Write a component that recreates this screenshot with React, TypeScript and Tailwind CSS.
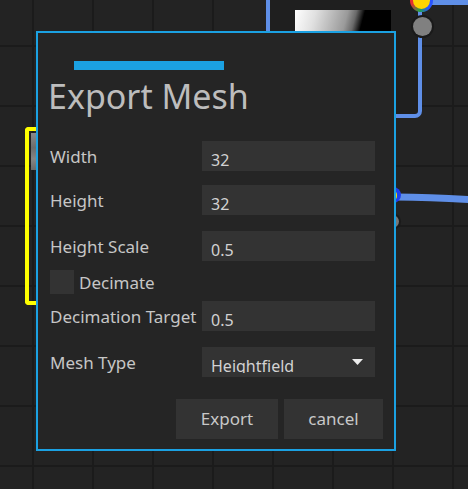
import React from "react";

function Field({ value, select }: { value: string; select?: boolean }) {
  return (
    <div className="relative w-[173px] h-[30px] bg-[#333333] pl-[9px]">
      <div
        className={
          "pt-[9px] text-[16px] leading-[20px] text-[#d2d2d2] " +
          (select ? "h-[26px] overflow-hidden" : "h-[30px]")
        }
      >
        {value}
      </div>
      {select && (
        <svg className="absolute right-[12px] top-[12px]" width="11" height="6" viewBox="0 0 11 6">
          <polygon points="0,0 11,0 5.5,6" fill="#ececec" />
        </svg>
      )}
    </div>
  );
}

function Row({ label, value, select, className }: { label: string; value: string; select?: boolean; className?: string }) {
  return (
    <div className={"flex items-center h-[30px] " + (className ?? "")}>
      <div className="w-[152px] pt-[1px] text-[17px] leading-[20px] text-[#c6c6c6] whitespace-nowrap">{label}</div>
      <Field value={value} select={select} />
    </div>
  );
}

export default function App() {
  return (
    <div className="relative w-[468px] h-[489px] overflow-hidden bg-[#232323] bg-[linear-gradient(to_right,#1b1b1b_2px,transparent_2px),linear-gradient(to_bottom,#1b1b1b_2px,transparent_2px)] bg-[size:60px_60px] bg-[position:32px_45px] font-['Noto_Sans',sans-serif]">
      {/* node in background */}
      <div className="absolute left-[266px] top-[-20px] w-[156px] h-[138px] rounded-br-[7px] border-4 border-[#5f8fe8] bg-[#1f1f1f]" />
      <div className="absolute left-[295px] top-[10px] w-[96px] h-[40px] bg-[linear-gradient(105deg,#ffffff_0%,#e0e0e0_20%,#9a9a9a_50%,#6a6a6a_58%,#000000_66%,#000000_100%)]" />
      <div className="absolute left-[430px] top-[-1px] w-[38px] h-[6px] bg-[#5f8fe8]" />
      <div className="absolute left-[410px] top-[-11px] w-[23px] h-[23px] rounded-full bg-[conic-gradient(#2a55ff_0deg,#2a55ff_140deg,#22a34a_190deg,#e53030_250deg,#e53030_360deg)] flex items-center justify-center">
        <div className="w-[17px] h-[17px] rounded-full bg-[#ffd400]" />
      </div>
      <div className="absolute left-[413px] top-[17px] w-[19px] h-[19px] rounded-full bg-[#808080] shadow-[0_0_0_2px_#1a1a1a]" />

      {/* wire on the right */}
      <svg className="absolute left-0 top-0" width="468" height="489">
        <path d="M396 197 C 430 197.5, 450 198.5, 470 199.5" stroke="#5f8fe8" strokeWidth="7" fill="none" />
      </svg>
      <div className="absolute left-[385px] top-[187px] w-[16px] h-[16px] rounded-full bg-[#1e3ff0] flex items-center justify-center">
        <div className="w-[8px] h-[9px] rounded-full bg-[#f0e000]" />
      </div>
      <div className="absolute left-[386px] top-[215px] w-[13px] h-[13px] rounded-full bg-[#777777] shadow-[0_0_0_2px_#1a1a1a]" />

      {/* yellow bracket on the left */}
      <div className="absolute left-[25px] top-[127px] w-[14px] h-[178px] border-4 border-r-0 border-[#ffff00] rounded-l-[4px]" />
      <div className="absolute left-[31px] top-[133px] w-[5px] h-[37px] bg-[linear-gradient(to_bottom,#8a8a8a,#6c6c6c_40%,#858585_70%,#6a6a6a)]" />

      {/* dialog */}
      <div className="absolute left-[36px] top-[31px] w-[360px] h-[420px] border-2 border-[#1ba1e2] bg-[#252525] flex flex-col">
        <div className="ml-[36px] mt-[28px] w-[150px] h-[9px] bg-[#1ba1e2]" />
        <div className="mt-[6px] pl-[10px] text-[34px] leading-[40px] text-[#bdbdbd]">Export Mesh</div>
        <div className="pl-[12px] flex flex-col">
          <Row label="Width" value="32" className="mt-[25px]" />
          <Row label="Height" value="32" className="mt-[14px]" />
          <Row label="Height Scale" value="0.5" className="mt-[16px]" />
          <div className="mt-[9px] flex items-center gap-[5px] h-[24px]">
            <div className="w-[24px] h-[24px] bg-[#333333]" />
            <div className="pt-[1px] text-[17px] leading-[20px] text-[#c6c6c6]">Decimate</div>
          </div>
          <Row label="Decimation Target" value="0.5" className="mt-[7px]" />
          <Row label="Mesh Type" value="Heightfield" select className="mt-[16px]" />
        </div>
        <div className="mt-[22px] pr-[11px] flex justify-end gap-[6px]">
          <div className="w-[102px] h-[40px] bg-[#333333] flex items-center justify-center text-[17px] leading-[20px] text-[#c8c8c8]">Export</div>
          <div className="w-[99px] h-[40px] bg-[#333333] flex items-center justify-center text-[17px] leading-[20px] text-[#c8c8c8]">cancel</div>
        </div>
      </div>
    </div>
  );
}
